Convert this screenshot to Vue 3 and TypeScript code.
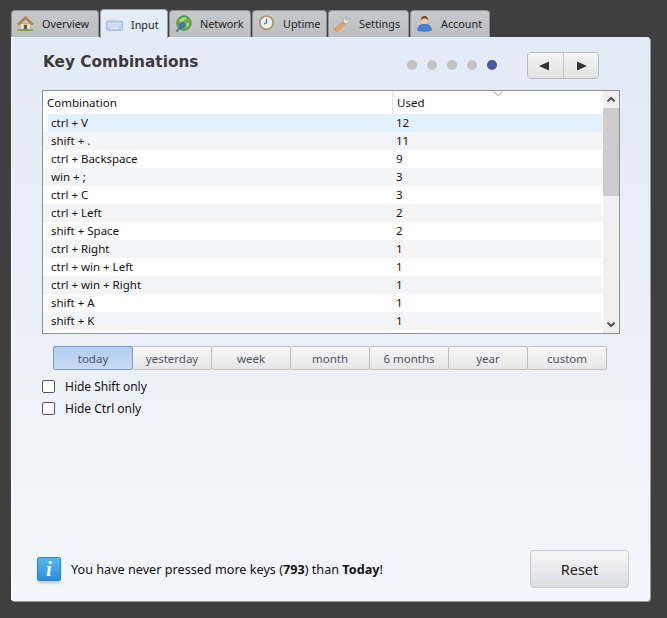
<script setup lang="ts">
interface Tab {
  key: string
  label: string
  width: number
}

const tabs: Tab[] = [
  { key: 'overview', label: 'Overview', width: 88 },
  { key: 'input', label: 'Input', width: 68 },
  { key: 'network', label: 'Network', width: 82 },
  { key: 'uptime', label: 'Uptime', width: 75 },
  { key: 'settings', label: 'Settings', width: 81 },
  { key: 'account', label: 'Account', width: 80 },
]

const rows: [string, number][] = [
  ['ctrl + V', 12],
  ['shift + .', 11],
  ['ctrl + Backspace', 9],
  ['win + ;', 3],
  ['ctrl + C', 3],
  ['ctrl + Left', 2],
  ['shift + Space', 2],
  ['ctrl + Right', 1],
  ['ctrl + win + Left', 1],
  ['ctrl + win + Right', 1],
  ['shift + A', 1],
  ['shift + K', 1],
]

const ranges = ['today', 'yesterday', 'week', 'month', '6 months', 'year', 'custom']
const dots = [0, 1, 2, 3, 4]
</script>

<template>
  <div class="window">
    <div class="tabs">
      <div
        v-for="tab in tabs"
        :key="tab.key"
        class="tab"
        :class="{ active: tab.key === 'input' }"
        :style="{ width: tab.width + 'px' }"
      >
        <svg class="tab-icon" width="17" height="17" viewBox="0 0 20 20">
          <template v-if="tab.key === 'overview'">
            <path d="M4 10h12v7H4z" fill="#f1e6d0" stroke="#a9895f" stroke-width=".6" />
            <path d="M.5 10.500 10 1.500l9.500 9-2 .8L10 4.800 2.500 11.300z" fill="#c9803c" stroke="#8f5a2a" stroke-width=".6" />
            <path d="M8 11.500h4V17H8z" fill="#6b5a48" />
            <path d="M1 17h18v1.800H1z" fill="#69a845" />
          </template>
          <template v-else-if="tab.key === 'input'">
            <path d="M3 5c2-2.500 5-2 7-.5" fill="none" stroke="#cdd9e8" stroke-width="1" />
            <rect x=".5" y="6" width="19" height="11" rx="1" fill="#bfd3ea" stroke="#9ab8da" />
            <path d="M2.500 9h15M2.500 11.500h15" stroke="#f0f5fb" stroke-width="1.200" stroke-dasharray="1.500 .7" />
            <path d="M5 14.300h10" stroke="#f0f5fb" stroke-width="1.300" />
          </template>
          <template v-else-if="tab.key === 'network'">
            <circle cx="10.500" cy="9.500" r="8.500" fill="#62b044" stroke="#3f7f3a" stroke-width="1" />
            <path d="M5 6c3-4 7-4 9-2-1 2-3 1-4 3s-3 3-5-1zM13 10c2-1 3-1 4 0-1 3-2 4-3 4z" fill="#a7dc80" />
            <path d="M1 19l4.500-5-.5-2.500 4-3.500 3.500 3.500-3.500 4-2.500-.5L3 19.500z" fill="#4a72b8" stroke="#2f4f8a" stroke-width=".5" />
          </template>
          <template v-else-if="tab.key === 'uptime'">
            <circle cx="10" cy="9" r="7.800" fill="#e9f1fb" stroke="#b8925a" stroke-width="2" />
            <path d="M10 4.500V9l-2.800 1.500" fill="none" stroke="#3f5f8f" stroke-width="1.300" />
          </template>
          <template v-else-if="tab.key === 'settings'">
            <path d="M1.500 18.500c-1-1-.8-2 0-2.800l9-7.700 2.500 2.500-8 8.500c-1 .8-2.500.5-3.500-.5z" fill="#f0a060" stroke="#d87f3c" stroke-width=".6" />
            <path d="M11 8.500c-.8-2.500.2-6 3.500-6.500l-1 3.500 2.200 1L18.500 4c.3 3.500-2 6.500-5 6z" fill="#e8e8e8" stroke="#8c8c8c" stroke-width=".7" />
          </template>
          <template v-else>
            <path d="M2 18c0-5 3-7.500 8-7.500s8 2.500 8 7.500c-3 1.500-13 1.500-16 0z" fill="#3f86d8" stroke="#2a5fa8" stroke-width=".6" />
            <circle cx="10" cy="6.500" r="4.200" fill="#f1c7a2" />
            <path d="M5.800 6.500C5.300 3 8 1.300 10 1.300s4.700 1.700 4.200 5.200c-1-2-2.200-2.500-4.200-2.500s-3.200.5-4.200 2.500z" fill="#7a4a24" />
          </template>
        </svg>
        <span class="tab-label">{{ tab.label }}</span>
      </div>
    </div>

    <div class="panel">
      <div class="head">
        <h1 class="title">Key Combinations</h1>
        <div class="pager">
          <span v-for="d in dots" :key="d" class="dot" :class="{ on: d === 4 }" />
        </div>
        <div class="arrows">
          <button class="arrow" type="button">
            <svg width="14" height="10" viewBox="0 0 14 10"><path d="M1 5 11 .5v9z" fill="#333" /></svg>
          </button>
          <button class="arrow" type="button">
            <svg width="14" height="10" viewBox="0 0 14 10"><path d="M13 5 3 .5v9z" fill="#333" /></svg>
          </button>
        </div>
      </div>

      <div class="table">
        <div class="table-main">
          <div class="thead">
            <div class="th first">Combination</div>
            <div class="th">Used</div>
            <svg class="sort" width="10" height="5" viewBox="0 0 10 5">
              <path d="M.5.500 5 4.500 9.500.500" fill="none" stroke="#9a9a9a" />
            </svg>
          </div>
          <div
            v-for="(row, i) in rows"
            :key="row[0]"
            class="tr"
            :class="{ selected: i === 0, alt: i % 2 === 1 }"
          >
            <div class="td first">{{ row[0] }}</div>
            <div class="td">{{ row[1] }}</div>
          </div>
        </div>
        <div class="scrollbar">
          <svg class="sb-arrow" width="16" height="17" viewBox="0 0 16 17">
            <path d="M4.500 10.500 8 7l3.500 3.500" fill="none" stroke="#505050" stroke-width="2" />
          </svg>
          <div class="thumb" />
          <div class="sb-track" />
          <svg class="sb-arrow" width="16" height="17" viewBox="0 0 16 17">
            <path d="M4.500 6.500 8 10l3.500-3.500" fill="none" stroke="#505050" stroke-width="2" />
          </svg>
        </div>
      </div>

      <div class="segments">
        <div v-for="(r, i) in ranges" :key="r" class="segment" :class="{ active: i === 0 }">{{ r }}</div>
      </div>

      <label class="check"><span class="box" />Hide Shift only</label>
      <label class="check second"><span class="box" />Hide Ctrl only</label>

      <div class="footer">
        <div class="info">
          <span class="info-i">i</span>
        </div>
        <p class="message">You have never pressed more keys (<b>793</b>) than <b>Today</b>!</p>
        <button class="reset" type="button">Reset</button>
      </div>
    </div>
  </div>
</template>

<style>
html,
body {
  margin: 0;
  background: #3f3f3f;
}
</style>

<style scoped>
.window {
  width: 667px;
  height: 618px;
  box-sizing: border-box;
  padding: 10px 17px 17px 11px;
  background: #3f3f3f;
  font-family: "Noto Sans", "Open Sans", sans-serif;
  font-size: 12px;
  color: #111;
  overflow: hidden;
}

.tabs {
  display: flex;
  gap: 1px;
  height: 27px;
}

.tab {
  position: relative;
  display: flex;
  align-items: center;
  box-sizing: border-box;
  height: 27px;
  padding: 0 0 2px 5px;
  background: linear-gradient(#c6c8ca, #bcbfc1);
  border: 1px solid #8e9194;
  border-bottom: 0;
  border-radius: 4px 4px 0 0;
  font-size: 10.800px;
  color: #222;
}

.tab.active {
  z-index: 1;
  height: 29px;
  margin-top: -1px;
  background: #e4ecf6;
  border-color: #9aa0a6;
  padding-top: 2px;
}

.tab-icon {
  flex: none;
  margin-right: 8px;
}

.panel {
  display: flex;
  flex-direction: column;
  box-sizing: border-box;
  width: 639px;
  height: 564px;
  padding: 0 30px 0 31px;
  background: linear-gradient(#e3ebf6, #f3f6fa);
  border-radius: 0 3px 3px 3px;
  box-shadow: inset 1px 0 0 #fff, 1px 1px 0 #999;
}

.head {
  display: flex;
  align-items: flex-start;
  height: 53px;
}

.title {
  flex: none;
  width: 364px;
  margin: 14px 0 0 1px;
  font-family: "DejaVu Sans", sans-serif;
  font-size: 15.300px;
  line-height: 22px;
  font-weight: 700;
  color: #3b3b3b;
}

.pager {
  display: flex;
  gap: 10px;
  width: 120px;
  margin-top: 23px;
}

.dot {
  width: 10px;
  height: 10px;
  border-radius: 50%;
  background: #c3c3c3;
}

.dot.on {
  background: #4a5a9c;
}

.arrows {
  display: flex;
  box-sizing: border-box;
  width: 72px;
  height: 27px;
  margin-top: 15px;
  border: 1px solid #b9b9b9;
  border-radius: 4px;
  overflow: hidden;
}

.arrow {
  flex: 1;
  display: flex;
  align-items: center;
  justify-content: center;
  padding: 0;
  border: 0;
  background: linear-gradient(#f5f5f5, #e2e2e2);
}

.arrow + .arrow {
  border-left: 1px solid #c6c6c6;
}

.table {
  display: flex;
  flex: none;
  box-sizing: border-box;
  width: 578px;
  height: 244px;
  background: #fff;
  border: 1px solid #8b8f94;
  font-size: 11.500px;
}

.table-main {
  flex: 1;
  min-width: 0;
  margin-right: 1px;
}

.thead {
  position: relative;
  display: flex;
  height: 23px;
}

.th {
  line-height: 24px;
  padding-left: 4px;
}

.th.first {
  width: 345px;
  border-right: 1px solid #e4e4e4;
}

.sort {
  position: absolute;
  top: 0;
  left: 450px;
}

.tr {
  display: flex;
  height: 18px;
  line-height: 18px;
}

.tr.alt {
  background: #f4f5f6;
}

.td {
  padding-left: 7px;
}

.td.first {
  width: 346px;
  box-sizing: border-box;
  padding-left: 8px;
}

.tr.selected {
  margin-left: 5px;
  background: #e3f1fc;
}

.tr.selected .td.first {
  width: 341px;
  padding-left: 3px;
}

.scrollbar {
  display: flex;
  flex-direction: column;
  flex: none;
  width: 16px;
  background: #f0f0f0;
}

.sb-arrow {
  flex: none;
}

.thumb {
  flex: none;
  height: 88px;
  background: #cdcdcd;
}

.sb-track {
  flex: 1;
}

.segments {
  display: flex;
  margin: 12px 0 0 11px;
  font-size: 11.500px;
}

.segment {
  box-sizing: border-box;
  width: 79px;
  height: 24px;
  line-height: 23px;
  text-align: center;
  color: #4c5566;
  background: linear-gradient(#f8f8f8, #e6e6e6);
  border: 1px solid #bdbdbd;
  border-left-width: 0;
  border-radius: 2px;
}

.segment.active {
  width: 80px;
  background: linear-gradient(#b2cdef, #c8daf4);
  border: 1px solid #7d9cc4;
}

.check {
  display: flex;
  align-items: center;
  gap: 10px;
  height: 16px;
  margin-top: 8px;
}

.check.second {
  margin-top: 6px;
}

.box {
  flex: none;
  box-sizing: border-box;
  width: 13px;
  height: 13px;
  background: #fff;
  border: 1px solid #555;
  border-radius: 2px;
}

.footer {
  display: flex;
  align-items: center;
  height: 38px;
  margin: auto -9px 13px -5px;
}

.info {
  display: flex;
  align-items: center;
  justify-content: center;
  flex: none;
  width: 24px;
  height: 24px;
  margin-right: 10px;
  background: linear-gradient(#55b8ee, #2a8fdc);
  border: 1px solid #2b86c8;
  box-sizing: border-box;
  border-radius: 2px;
  box-shadow: 0 3px 3px -1px rgba(0, 0, 0, 0.2);
}

.info-i {
  font-family: "Liberation Serif", serif;
  font-size: 21px;
  font-style: italic;
  font-weight: 700;
  line-height: 1;
  color: #fff;
}

.message {
  flex: 1;
  margin: 0;
  font-size: 12.650px;
}

.reset {
  flex: none;
  width: 99px;
  height: 38px;
  padding: 0;
  font-family: inherit;
  font-size: 14.500px;
  color: #222;
  background: linear-gradient(#f7f7f8, #dcdddf);
  border: 1px solid #c6c8cc;
  border-radius: 4px;
}
</style>
